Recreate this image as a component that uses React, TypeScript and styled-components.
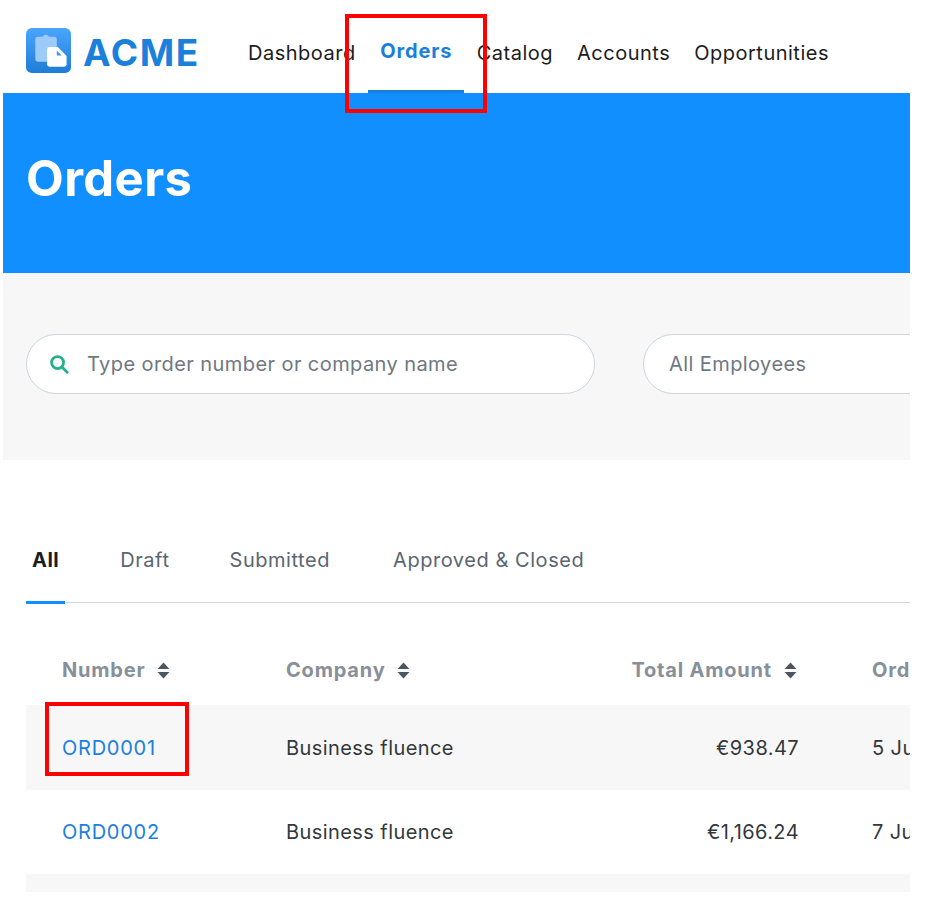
import React, { FunctionComponent } from 'react'
import styled, { createGlobalStyle } from 'styled-components'

const GlobalStyle = createGlobalStyle`
  html, body {
    margin: 0;
    padding: 0;
    background: #fff;
    font-family: Inter, "Liberation Sans", sans-serif;
    letter-spacing: 0.42px;
  }
`

const Stage = styled.div`
  position: relative;
  width: 926px;
  height: 897px;
  overflow: hidden;
`

const Page = styled.main`
  width: 907px;
  height: 892px;
  margin-left: 3px;
  overflow: hidden;
`

const Header = styled.header`
  display: flex;
  align-items: stretch;
  height: 93px;
  padding-left: 23px;
  box-sizing: border-box;
`

const Brand = styled.div`
  display: flex;
  align-items: center;
  gap: 12px;
  width: 210px;
  padding-top: 8px;
  box-sizing: border-box;
`

const BrandName = styled.span`
  padding-top: 3px;
  color: #1b7fdc;
  font-size: 37px;
  font-weight: 700;
  letter-spacing: 1.6px;
`

const Nav = styled.nav`
  display: flex;
  align-items: stretch;
`

const NavItem = styled.a<{ $active?: boolean }>`
  display: flex;
  align-items: center;
  padding: ${({ $active }) => ($active ? '12px 12px 0' : '16px 12px 0')};
  margin: ${({ $active }) => ($active ? '0 0.5px' : '0')};
  border-bottom: 3px solid ${({ $active }) => ($active ? '#1b7fdc' : 'transparent')};
  color: ${({ $active }) => ($active ? '#1b7fdc' : '#1c1c1e')};
  font-size: 20px;
  font-weight: ${({ $active }) => ($active ? 700 : 400)};
  letter-spacing: ${({ $active }) => ($active ? 0.85 : 0.5)}px;
`

const Banner = styled.section`
  display: flex;
  align-items: center;
  height: 180px;
  padding: 0 23px 10px;
  box-sizing: border-box;
  background: #118eff;
`

const Title = styled.h1`
  margin: 0;
  color: #fff;
  font-size: 49px;
  font-weight: 700;
  letter-spacing: 0.4px;
`

const Filters = styled.section`
  display: flex;
  gap: 48px;
  height: 187px;
  padding: 61px 0 0 23px;
  box-sizing: border-box;
  background: #f7f7f7;
`

const Pill = styled.div<{ $width: number }>`
  display: flex;
  align-items: center;
  flex-shrink: 0;
  gap: 18px;
  width: ${({ $width }) => $width}px;
  height: 60px;
  padding-left: ${({ $width }) => ($width > 400 ? 22 : 25)}px;
  box-sizing: border-box;
  border: 1.5px solid #cdd5dd;
  border-radius: 30px;
  background: #fff;
  color: #6f7882;
  font-size: 20px;
`

const Tabs = styled.div`
  display: flex;
  height: 143px;
  margin-left: 23px;
  align-items: flex-end;
  box-sizing: border-box;
  border-bottom: 1.5px solid #cdd5dd;
`

const TabItem = styled.a<{ $active?: boolean; $gap: number }>`
  margin-right: ${({ $gap }) => $gap}px;
  padding: 0 ${({ $active }) => ($active ? '6px' : '0')} 29px;
  margin-bottom: -1.5px;
  border-bottom: 3px solid ${({ $active }) => ($active ? '#118eff' : 'transparent')};
  color: ${({ $active }) => ($active ? '#1c1c1e' : '#5b6570')};
  font-size: 20px;
  font-weight: ${({ $active }) => ($active ? 700 : 400)};
  letter-spacing: ${({ $active }) => ($active ? 0.5 : 0.55)}px;
  line-height: 24px;
`

const Table = styled.div`
  margin-left: 23px;
`

const Row = styled.div<{ $head?: boolean; $shaded?: boolean }>`
  display: grid;
  grid-template-columns: 260px 300px 213px 1fr;
  align-items: center;
  height: ${({ $head }) => ($head ? 102 : 84.5)}px;
  padding-top: ${({ $head }) => ($head ? 32 : 1)}px;
  box-sizing: border-box;
  background: ${({ $shaded }) => ($shaded ? '#f7f7f7' : 'transparent')};
  white-space: nowrap;
`

const HeadCell = styled.div<{ $inset?: number; $right?: boolean }>`
  display: flex;
  align-items: center;
  justify-content: ${({ $right }) => ($right ? 'flex-end' : 'flex-start')};
  gap: 12px;
  margin-right: ${({ $right }) => ($right ? 2 : 0)}px;
  padding-left: ${({ $inset }) => $inset ?? 0}px;
  color: #87909a;
  font-size: 20px;
  font-weight: 700;
  letter-spacing: 0.8px;
`

const NumberCell = styled.a`
  padding-left: 36px;
  color: #1b7fdc;
  font-size: 20px;
  letter-spacing: 0.75px;
`

const Cell = styled.div<{ $right?: boolean; $inset?: number }>`
  padding-left: ${({ $inset }) => $inset ?? 0}px;
  color: #33383d;
  font-size: 20px;
  text-align: ${({ $right }) => ($right ? 'right' : 'left')};
`

const FillerRow = styled.div`
  height: 18px;
  background: #f7f7f7;
`

const Highlight = styled.div<{ $left: number; $top: number; $width: number; $height: number }>`
  position: absolute;
  left: ${({ $left }) => $left}px;
  top: ${({ $top }) => $top}px;
  width: ${({ $width }) => $width}px;
  height: ${({ $height }) => $height}px;
  box-sizing: border-box;
  border: 4.5px solid #ff0000;
`

const LogoIcon: FunctionComponent = () => (
  <svg width="45" height="45" viewBox="0 0 46 46">
    <defs>
      <linearGradient id="logoFill" x1="0" y1="0" x2="0" y2="1">
        <stop offset="0" stopColor="#4aa5fb" />
        <stop offset="1" stopColor="#1f7cd8" />
      </linearGradient>
    </defs>
    <rect width="46" height="46" rx="6" fill="url(#logoFill)" />
    <path
      d="M12 9h5a3.500 3.500 0 0 1 6.500 0H29a2.500 2.500 0 0 1 2.500 2.500V32a2.500 2.500 0 0 1-2.500 2.500H12A2.500 2.500 0 0 1 9.500 32V11.500A2.500 2.500 0 0 1 12 9z"
      fill="#9ccaf9"
    />
    <path
      d="M24 19.500h8.500l9 9V37a2.500 2.500 0 0 1-2.500 2.500H24a2.500 2.500 0 0 1-2.500-2.500V22a2.500 2.500 0 0 1 2.500-2.500z"
      fill="#fff"
    />
    <path d="M31.500 23l5 5h-5z" fill="#3f97ee" />
  </svg>
)

const SearchIcon: FunctionComponent = () => (
  <svg width="20" height="20" viewBox="0 0 20 20" fill="none" stroke="#25b08f" strokeWidth="2.8">
    <circle cx="8.6" cy="8.6" r="6" />
    <path d="M13 13l5.2 5.2" strokeLinecap="round" />
  </svg>
)

const SortIcon: FunctionComponent = () => (
  <svg width="13" height="17" viewBox="0 0 13 17" fill="#4d5660">
    <path d="M6.5 0.5L12.5 7H0.5z" />
    <path d="M0.5 10H12.5L6.5 16.5z" />
  </svg>
)

const orders = [
  { number: 'ORD0001', company: 'Business fluence', amount: '€938.47', date: '5 Jun 2020' },
  { number: 'ORD0002', company: 'Business fluence', amount: '€1,166.24', date: '7 Jun 2020' },
]

const App: FunctionComponent = () => (
  <Stage>
    <GlobalStyle />
    <Page>
      <Header>
        <Brand>
          <LogoIcon />
          <BrandName>ACME</BrandName>
        </Brand>
        <Nav>
          <NavItem>Dashboard</NavItem>
          <NavItem $active>Orders</NavItem>
          <NavItem>Catalog</NavItem>
          <NavItem>Accounts</NavItem>
          <NavItem>Opportunities</NavItem>
        </Nav>
      </Header>
      <Banner>
        <Title>Orders</Title>
      </Banner>
      <Filters>
        <Pill $width={569}>
          <SearchIcon />
          Type order number or company name
        </Pill>
        <Pill $width={400}>All Employees</Pill>
      </Filters>
      <Tabs>
        <TabItem $active $gap={55}>All</TabItem>
        <TabItem $gap={60}>Draft</TabItem>
        <TabItem $gap={63}>Submitted</TabItem>
        <TabItem $gap={0}>Approved &amp; Closed</TabItem>
      </Tabs>
      <Table>
        <Row $head>
          <HeadCell $inset={36}>Number <SortIcon /></HeadCell>
          <HeadCell>Company <SortIcon /></HeadCell>
          <HeadCell $right>Total Amount <SortIcon /></HeadCell>
          <HeadCell $inset={73}>Order Date</HeadCell>
        </Row>
        {orders.map((order, index) => (
          <Row key={order.number} $shaded={index % 2 === 0}>
            <NumberCell>{order.number}</NumberCell>
            <Cell>{order.company}</Cell>
            <Cell $right>{order.amount}</Cell>
            <Cell $inset={73}>{order.date}</Cell>
          </Row>
        ))}
        <FillerRow />
      </Table>
    </Page>
    <Highlight $left={345} $top={14} $width={142} $height={99} />
    <Highlight $left={45} $top={702} $width={144} $height={74} />
  </Stage>
)

export default App
